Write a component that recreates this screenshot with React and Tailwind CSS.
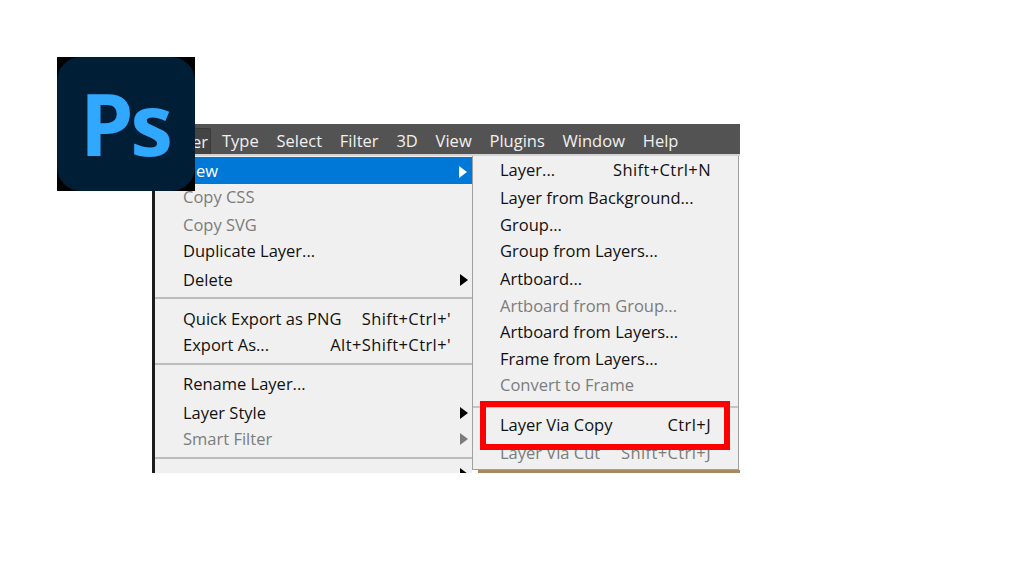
// App.jsx
const FONT = "font-['Open_Sans','Noto_Sans',sans-serif]";

const menuBar = ['Type', 'Select', 'Filter', '3D', 'View', 'Plugins', 'Window', 'Help'];

const Arrow = ({ color = 'border-l-black' }) => (
  <span className={`h-0 w-0 border-y-[6px] border-l-[8px] border-y-transparent ${color}`} />
);

const Row = ({ label, keys, disabled, arrow, h = 'h-[27px]', arrowColor }) => (
  <div className={`flex ${h} shrink-0 items-center justify-between pl-[28px] pr-[4px] ${disabled ? 'text-[#7c7c7c]' : 'text-[#111]'}`}>
    <span>{label}</span>
    {keys && <span className="pr-[17px] tracking-[0.4px]">{keys}</span>}
    {arrow && <Arrow color={arrowColor} />}
  </div>
);

const Divider = ({ className = '' }) => <div className={`h-[2px] shrink-0 bg-[#bcbcbc] ${className}`} />;

const SubRow = ({ label, keys, disabled, h = 'h-[27px]' }) => (
  <div className={`flex ${h} shrink-0 items-center justify-between pl-[27px] pr-[27px] ${disabled ? 'text-[#7c7c7c]' : 'text-[#111]'}`}>
    <span>{label}</span>
    {keys && <span className="tracking-[0.4px]">{keys}</span>}
  </div>
);

const PsLogo = () => (
  <div className="relative z-10 h-[134px] w-[138px] shrink-0 bg-black">
    <div className="flex h-full w-full items-center justify-center rounded-[24px] bg-[#001e36] pb-[2px] pr-[3px]">
      <span className="font-['Open_Sans',sans-serif] text-[86px] font-bold leading-none tracking-[-3.5px] text-[#31a8ff]">Ps</span>
    </div>
  </div>
);

export default function App() {
  return (
    <div className={`h-[582px] w-[1035px] overflow-hidden bg-white pl-[57px] pt-[57px] text-[16.5px] ${FONT}`}>
      <div className="flex items-start">
        <PsLogo />
        {/* Screenshot of the Photoshop layer menu, tucked behind the logo */}
        <div className="-ml-[43px] mt-[67px] flex h-[349px] w-[588px] flex-col border-l-[3px] border-[#1c1c1c]">
          <div className="flex h-[30px] shrink-0 items-center bg-[#535353] pt-[4px] text-[#f0f0f0]">
            <div className="-mt-[4px] ml-[38px] flex h-[26px] w-[18px] items-center justify-end self-end rounded-t-[2px] border border-b-0 border-[#3a3a3a] bg-[#444] pr-[2px] pt-[2px]">er</div>
            <div className="ml-[11px] flex gap-[17.8px]">
              {menuBar.map((name) => (
                <span key={name}>{name}</span>
              ))}
            </div>
          </div>
          <div className="flex min-h-0 flex-1 border-t-2 border-[#d4d4d4]">
            <div className="flex w-[317px] shrink-0 flex-col overflow-hidden bg-[#f0f0f0] pt-[1px]">
              <div className="flex h-[27px] shrink-0 items-center justify-between bg-[#0078d7] pl-[41px] pr-[5px] pt-[2px] text-white">
                <span>ew</span>
                <Arrow color="border-l-white" />
              </div>
              <Row label="Copy CSS" disabled />
              <Row label="Copy SVG" disabled h="h-[28px]" />
              <Row label="Duplicate Layer..." h="h-[24px]" />
              <Row label="Delete" arrow h="h-[34px]" />
              <Divider />
              <div className="mt-[5px]">
                <Row label="Quick Export as PNG" keys="Shift+Ctrl+'" h="h-[30px]" />
              </div>
              <Row label="Export As..." keys="Alt+Shift+Ctrl+'" h="h-[22px]" />
              <Divider className="mt-[7px]" />
              <div className="mt-[4px]">
                <Row label="Rename Layer..." h="h-[30px]" />
              </div>
              <Row label="Layer Style" arrow h="h-[28px]" />
              <Row label="Smart Filter" disabled arrow arrowColor="border-l-[#7c7c7c]" h="h-[24px]" />
              <Divider className="mt-[6px]" />
              {/* Next submenu arrow, cut off by the bottom of the screenshot */}
              <div className="flex justify-end pr-[4px] pt-[9px]">
                <Arrow />
              </div>
            </div>
            <div className="flex min-w-0 flex-1 flex-col">
              <div className="flex h-[315px] w-[267px] flex-col border border-t-0 border-[#a0a0a0] bg-[#f0f0f0]">
                <SubRow label="Layer..." keys="Shift+Ctrl+N" h="h-[29px]" />
                <SubRow label="Layer from Background..." h="h-[26px]" />
                <SubRow label="Group..." h="h-[28px]" />
                <SubRow label="Group from Layers..." h="h-[25px]" />
                <SubRow label="Artboard..." h="h-[30px]" />
                <SubRow label="Artboard from Group..." disabled h="h-[24px]" />
                <SubRow label="Artboard from Layers..." h="h-[28px]" />
                <SubRow label="Frame from Layers..." h="h-[26px]" />
                <SubRow label="Convert to Frame" disabled h="h-[26px]" />
                <div className="relative mt-[8px] h-[2px] shrink-0 bg-[#c4c4c4]">
                  {/* Red highlight box sits over the rows */}
                  <div className="absolute -top-[5px] left-[7px] z-10 h-[49px] w-[250px] border-[6px] border-[#f00]" />
                </div>
                <SubRow label="Layer Via Copy" keys="Ctrl+J" h="h-[35px]" />
                <SubRow label="Layer Via Cut" keys="Shift+Ctrl+J" disabled h="h-[20px]" />
              </div>
              <div className="ml-[6px] h-[3px] w-[262px] bg-[#a58a5f]" />
            </div>
          </div>
        </div>
      </div>
    </div>
  );
}
